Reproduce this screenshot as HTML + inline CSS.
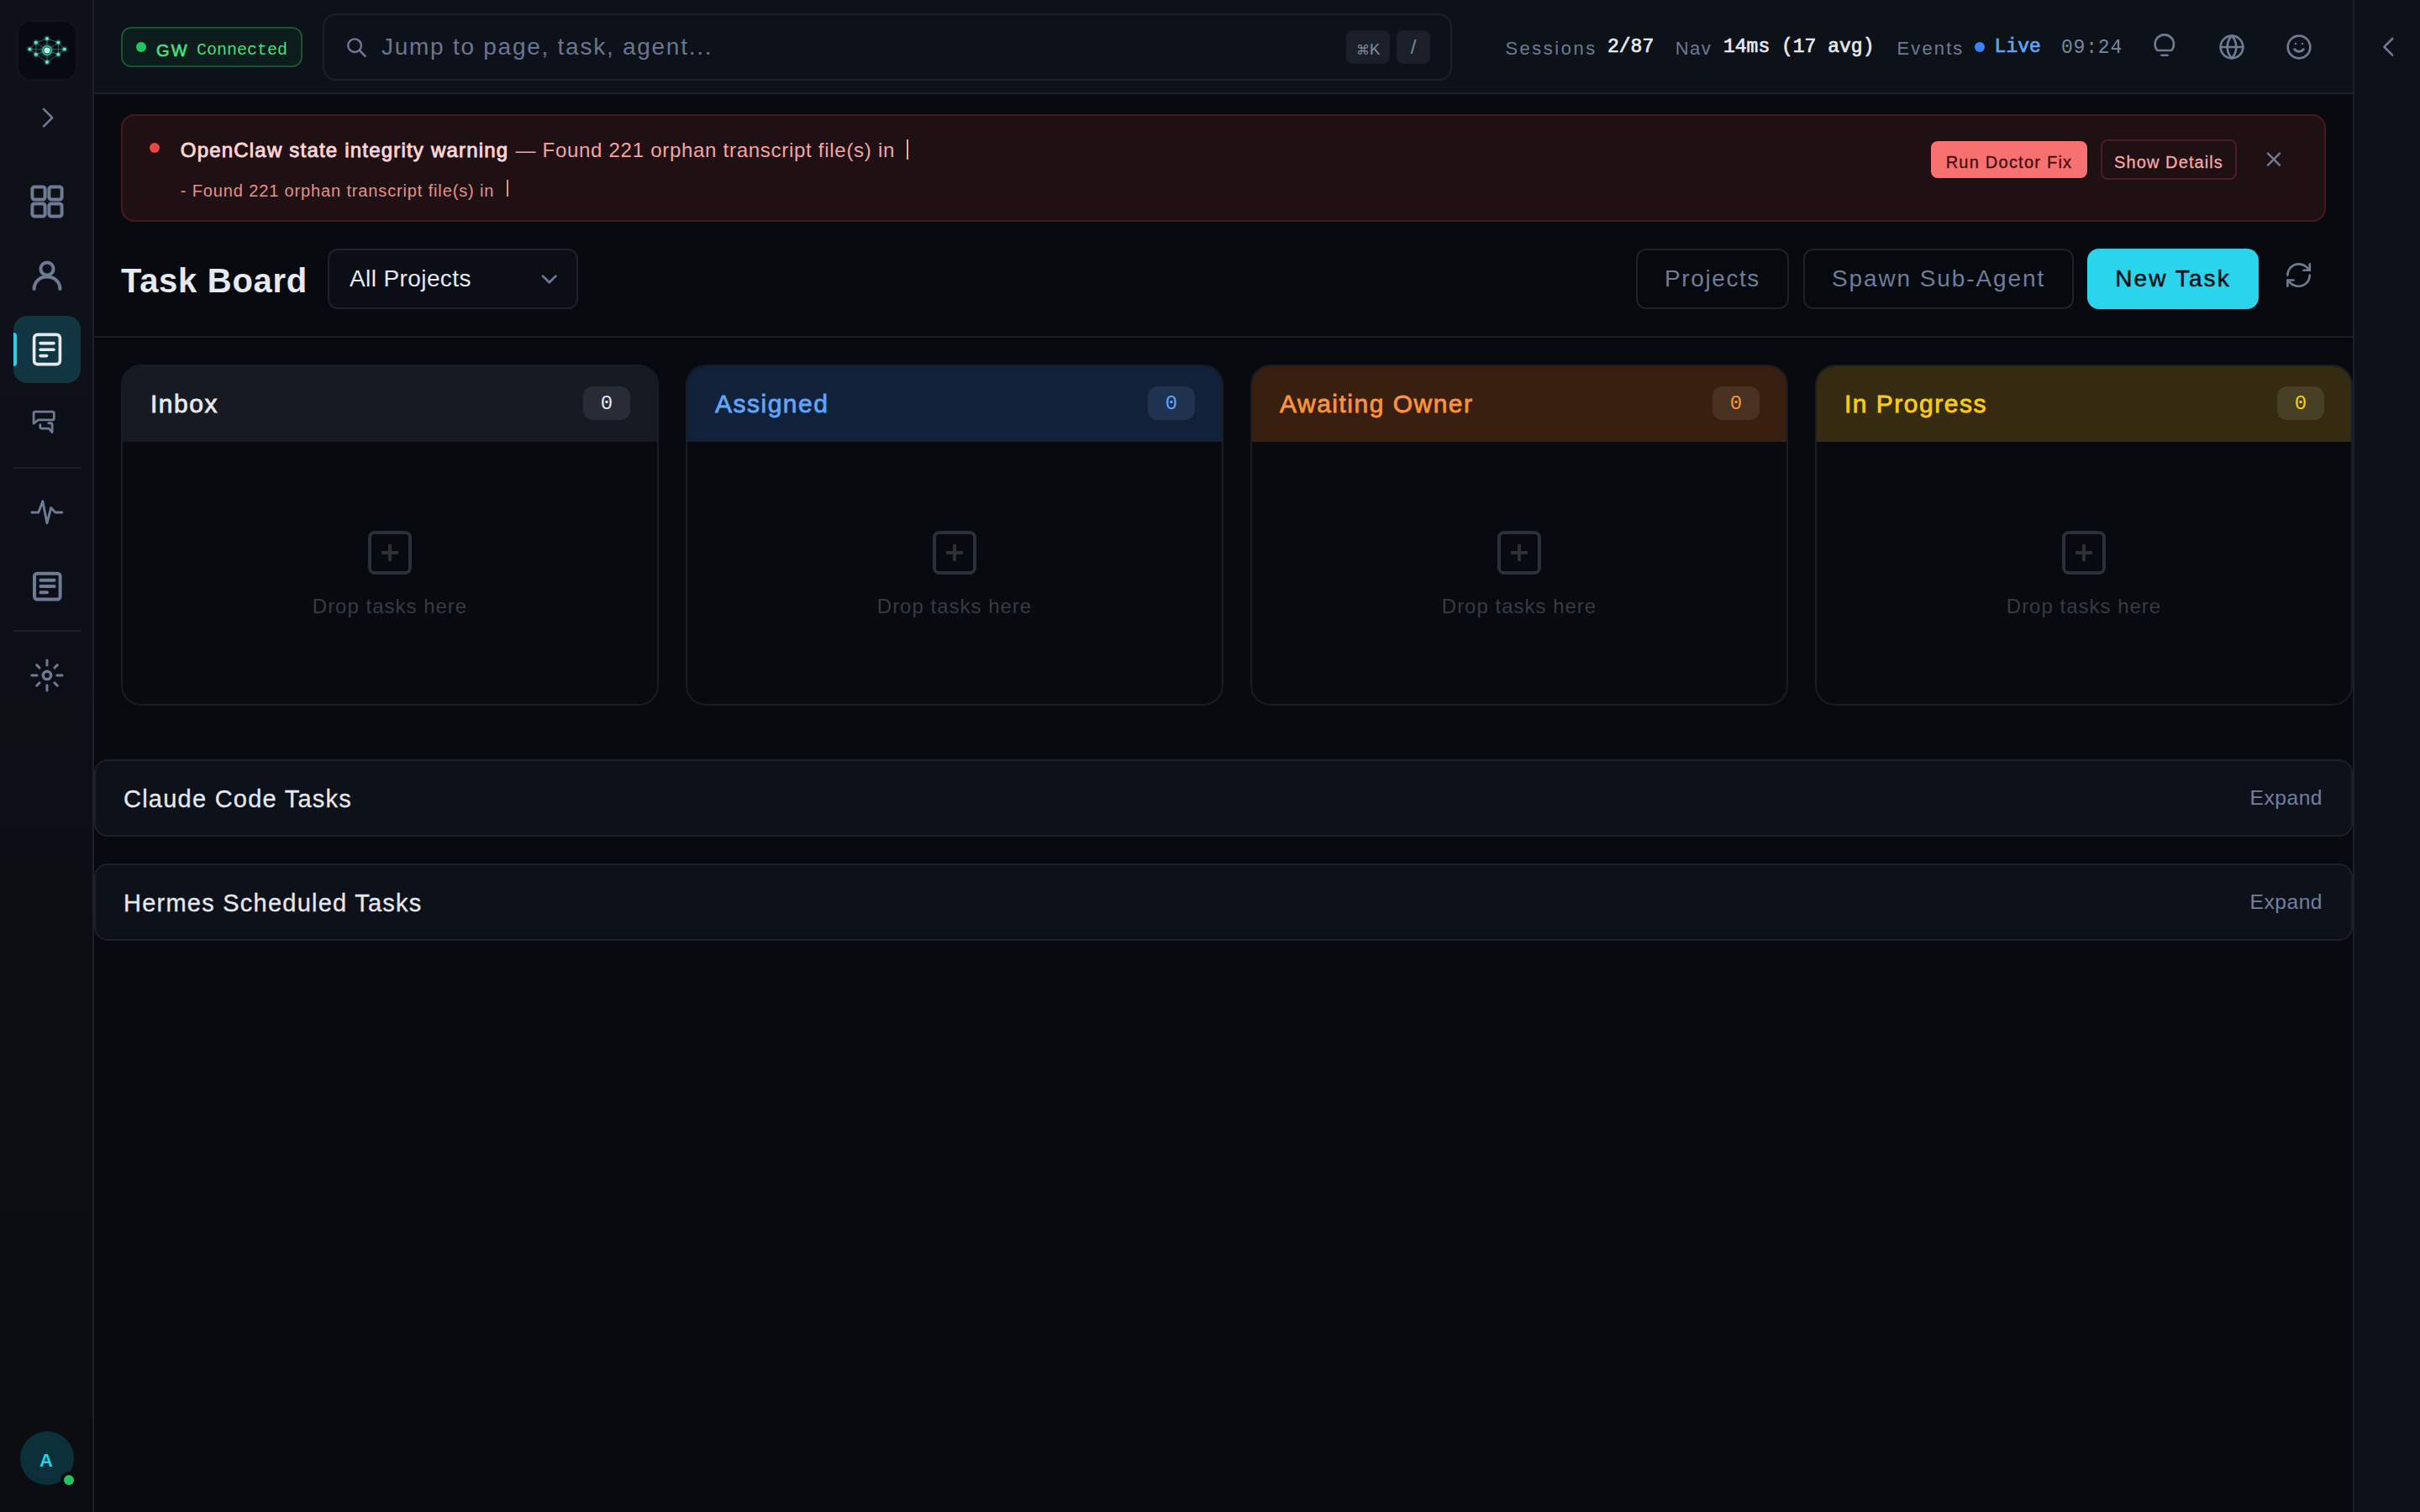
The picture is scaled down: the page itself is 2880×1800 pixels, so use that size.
<!DOCTYPE html>
<html><head><meta charset="utf-8">
<style>
*{box-sizing:border-box;margin:0;padding:0}
html,body{width:1440px;height:900px;overflow:hidden;background:#06090d}
@media (min-width:2000px){html{zoom:2}}
body{font-family:"Liberation Sans",sans-serif;color:#e5e8ee;position:relative}
.abs{position:absolute}
.mono{font-family:"Liberation Mono",monospace}
.t{position:absolute;white-space:pre;line-height:1}
svg{position:absolute;overflow:visible}
/* sidebar */
#side{left:0;top:0;width:56px;height:900px;background:linear-gradient(180deg,#0e1118 0%,#0c0f15 45%,#0a0c10 100%);border-right:1px solid #1c202a}
#topbar{left:56px;top:0;width:1344px;height:56px;background:#0d1118;border-bottom:1px solid #1c202a}
#rail{left:1400px;top:0;width:40px;height:900px;background:#0d1118;border-left:1px solid #1c202a}
.ic{fill:none;stroke:#6e7b94;stroke-width:2;stroke-linecap:round;stroke-linejoin:round}
.card{position:absolute;top:217px;width:320px;height:203px;border:1px solid #181c25;border-radius:12px;background:#070a0e;overflow:hidden}
.card .hd{position:absolute;left:0;top:0;right:0;height:45px}
.card .ttl{position:absolute;left:16.5px;top:14.8px;font-size:15px;font-weight:400;-webkit-text-stroke:.4px currentColor;line-height:1;letter-spacing:.75px}
.card .cnt{position:absolute;right:16px;top:12px;width:28px;height:20px;border-radius:6px;font-family:"Liberation Mono",monospace;font-size:12px;line-height:21px;text-align:center}
.card .plus{position:absolute;left:146px;top:98px;width:26px;height:26px;border:2px solid #2b313b;border-radius:4px}
.card .plus:before{content:"";position:absolute;left:6px;top:10px;width:10px;height:2px;background:#2b313b}
.card .plus:after{content:"";position:absolute;left:10px;top:6px;width:2px;height:10px;background:#2b313b}
.card .drop{position:absolute;left:0;right:0;top:137px;text-align:center;font-size:12px;line-height:1;color:#363b47;letter-spacing:.5px}
.panel{position:absolute;left:56px;width:1344px;height:46px;border:1px solid #1c202a;border-radius:8px;background:#0d1119}
.panel .pt{position:absolute;left:16.5px;top:15.5px;font-size:14.5px;line-height:1;color:#e5e8ee;letter-spacing:.62px;-webkit-text-stroke:.15px currentColor}
.panel .ex{position:absolute;right:17px;top:16.2px;font-size:12.3px;line-height:1;color:#7180a0;letter-spacing:.25px}
</style></head><body>

<!-- SIDEBAR -->
<div id="side" class="abs">
  <div class="abs" style="left:11px;top:13px;width:34px;height:34px;border-radius:7px;background:#070a10;box-shadow:0 0 0 1px #12151c"></div>
  <svg style="left:0;top:0" width="56" height="60" viewBox="0 0 56 60"><defs><filter id="gl" x="-50%" y="-50%" width="200%" height="200%"><feGaussianBlur stdDeviation=".6"/></filter><radialGradient id="cg"><stop offset="0" stop-color="#5fe6cf" stop-opacity=".55"/><stop offset="1" stop-color="#5fe6cf" stop-opacity="0"/></radialGradient></defs>
    <circle cx="28" cy="30" r="5" fill="url(#cg)"/>
    <g stroke="#3f8a80" stroke-width=".45" fill="none" opacity=".75">
      <path d="M28 23L21.4 25.3L17.7 29.3L21.4 32.4L28 37L34.7 32.4L38.4 29.3L34.7 25.3Z"/>
      <path d="M28 23V37M17.7 29.3H38.4M21.4 25.3L28 30L34.7 25.3M21.4 32.4L28 30L34.7 32.4M21.4 25.3V32.4M34.7 25.3V32.4"/>
    </g>
    <g fill="#5ad9bf" filter="url(#gl)" opacity=".6"><circle cx="28" cy="23" r="1.4"/><circle cx="21.4" cy="25.3" r="1.4"/><circle cx="34.7" cy="25.3" r="1.4"/><circle cx="17.7" cy="29.3" r="1.4"/><circle cx="38.4" cy="29.3" r="1.4"/><circle cx="21.4" cy="32.4" r="1.4"/><circle cx="34.7" cy="32.4" r="1.4"/><circle cx="28" cy="37" r="1.4"/></g>
    <g fill="#6fe3c9">
      <circle cx="28" cy="23" r=".95"/><circle cx="21.4" cy="25.3" r=".95"/><circle cx="34.7" cy="25.3" r=".95"/>
      <circle cx="17.7" cy="29.3" r=".95"/><circle cx="38.4" cy="29.3" r=".95"/>
      <circle cx="21.4" cy="32.4" r=".95"/><circle cx="34.7" cy="32.4" r=".95"/><circle cx="28" cy="37" r=".95"/>
    </g>
    <circle cx="28" cy="30" r="2.6" fill="#0e3a38" stroke="#3fc7b0" stroke-width=".7"/>
    <circle cx="28" cy="30" r="1.8" fill="#b8f6ea"/>
  </svg>
  <!-- chevron -->
  <svg style="left:0;top:0" width="56" height="900" viewBox="0 0 56 900">
    <path class="ic" style="stroke-width:1.3" d="M26 64.9L31.1 70.05L26 75.2"/>
    <!-- grid -->
    <g class="ic" stroke-width="1.8">
      <rect x="19.2" y="111.2" width="7.6" height="7.6" rx="1.4"/>
      <rect x="29.2" y="111.2" width="7.6" height="7.6" rx="1.4"/>
      <rect x="19.2" y="121.2" width="7.6" height="7.6" rx="1.4"/>
      <rect x="29.2" y="121.2" width="7.6" height="7.6" rx="1.4"/>
    </g>
    <!-- person -->
    <g class="ic" stroke-width="1.8">
      <circle cx="28" cy="160" r="3.8"/>
      <path d="M20.3 172C20.3 167.5 23.8 164.8 28 164.8C32.2 164.8 35.7 167.5 35.7 172"/>
    </g>
  </svg>
  <div class="abs" style="left:8px;top:188px;width:40px;height:40px;border-radius:8px;background:#113641"></div>
  <div class="abs" style="left:8px;top:198px;width:2px;height:20px;border-radius:0 2px 2px 0;background:#22d3ee"></div>
  <svg style="left:0;top:0" width="56" height="900" viewBox="0 0 56 900">
    <g class="ic" style="stroke:#e6e9ef;stroke-width:1.8">
      <rect x="20.3" y="199.2" width="15.4" height="17.6" rx="2"/>
      <path d="M24 204.3H32M24 208.1H32M24 211.8H27.8"/>
    </g>
    <!-- chat -->
    <g class="ic" style="stroke-width:1.4">
      <path d="M20.04 252.06V246.02A1 1 0 0 1 21.04 245.02H31.15A1 1 0 0 1 32.15 246.02V248.98A1 1 0 0 1 31.15 249.98H22.72Z"/>
      <path d="M23.91 252.86V254.04A1 1 0 0 0 24.91 255.04H29.07L31.05 257.22V252.87A1 1 0 0 0 30.05 251.87H28.87"/>
    </g>
    <line x1="8" y1="278.5" x2="48" y2="278.5" stroke="#1c2029" stroke-width="1"/>
    <!-- pulse -->
    <path class="ic" style="stroke-width:1.45" d="M18.95 304.98H22.92L25.4 298.33L27.98 311.43L30.36 302.2L32.84 304.98H36.9"/>
    <!-- doc -->
    <g class="ic" stroke-width="1.8">
      <rect x="20.5" y="341.4" width="15.3" height="15.3" rx="1.6"/>
      <path d="M24.2 345.4H32.3M24.2 349H32.3M24.2 352.6H28"/>
    </g>
    <line x1="8" y1="375.5" x2="48" y2="375.5" stroke="#1c2029" stroke-width="1"/>
    <!-- gear/sun -->
    <g class="ic" style="stroke-width:1.5">
      <circle cx="27.98" cy="401.98" r="2.35" style="stroke-width:1.7"/>
      <path d="M27.98 392.95V396.03M27.98 407.93V411.01M18.95 401.98H22.03M33.93 401.98H37.01M21.83 395.83L23.52 397.52M32.44 406.44L34.13 408.13M21.83 408.13L23.52 406.44M32.44 397.52L34.13 395.83"/>
    </g>
  </svg>
  <!-- avatar -->
  <div class="abs" style="left:12px;top:852px;width:32px;height:32px;border-radius:50%;background:#0c303a"></div>
  <div class="t" style="left:11.5px;top:863.8px;width:32px;text-align:center;font-size:11px;font-weight:700;color:#22d3ee">A</div>
  <div class="abs" style="left:36px;top:876px;width:10px;height:10px;border-radius:50%;background:#22c55e;border:2px solid #0a0d13"></div>
</div>

<!-- TOPBAR -->
<div id="topbar" class="abs">
  <div class="abs" style="left:16px;top:16px;width:108px;height:24px;border-radius:6px;border:1px solid #185430;background:#0d1c1c"></div>
  <div class="abs" style="left:25px;top:25px;width:6px;height:6px;border-radius:50%;background:#22c55e"></div>
  <div class="t" style="left:37px;top:25px;font-size:10px;-webkit-text-stroke:.35px currentColor;color:#4ade80;letter-spacing:1.1px">GW</div>
  <div class="t mono" style="left:61px;top:24.8px;font-size:10px;color:#4ade80;letter-spacing:0px">Connected</div>

  <div class="abs" style="left:136px;top:8px;width:672px;height:40px;border-radius:8px;border:1px solid #1c212b;background:#0d1119"></div>
  <svg style="left:0;top:0" width="300" height="56" viewBox="0 0 300 56">
    <g class="ic" style="stroke-width:1.2"><circle cx="155.06" cy="27.1" r="3.9"/><path d="M157.9 29.95L161.3 33.4"/></g>
  </svg>
  <div class="t" style="left:171px;top:21px;font-size:14px;color:#687791;letter-spacing:.87px">Jump to page, task, agent...</div>
  <div class="abs" style="left:745px;top:18px;width:26px;height:20px;border-radius:4px;background:#1a1f29"></div>
  <div class="t" style="left:745px;top:24.2px;width:26px;text-align:center;font-size:10px;color:#7b879c"><span style="font-size:8px">⌘</span><span class="mono" style="font-size:10.5px">K</span></div>
  <div class="abs" style="left:775px;top:18px;width:20px;height:20px;border-radius:4px;background:#1a1f29"></div>
  <div class="t" style="left:775px;top:21.8px;width:20px;text-align:center;font-size:12px;color:#7b879c">/</div>

  <div class="t" style="left:839.7px;top:23.6px;font-size:11px;color:#6b7a95;letter-spacing:1.25px">Sessions</div>
  <div class="t mono" style="left:900.5px;top:22.5px;font-size:11.5px;-webkit-text-stroke:.35px currentColor;color:#e6e9ef">2/87</div>
  <div class="t" style="left:940.9px;top:23.6px;font-size:11px;color:#6b7a95;letter-spacing:.7px">Nav</div>
  <div class="t mono" style="left:969.5px;top:22.5px;font-size:11.5px;-webkit-text-stroke:.35px currentColor;color:#e6e9ef">14ms (17 avg)</div>
  <div class="t" style="left:1072.8px;top:23.6px;font-size:11px;color:#6b7a95;letter-spacing:1.05px">Events</div>
  <div class="abs" style="left:1119px;top:25px;width:6px;height:6px;border-radius:50%;background:#3b82f6"></div>
  <div class="t mono" style="left:1130.8px;top:22.5px;font-size:11.5px;-webkit-text-stroke:.35px currentColor;color:#60a5fa">Live</div>
  <div class="t mono" style="left:1170.5px;top:23px;font-size:11.5px;color:#7b879c;letter-spacing:.4px">09:24</div>
  <svg style="left:0;top:0" width="1344" height="56" viewBox="0 0 1344 56">
    <g class="ic" style="stroke-width:1.3">
      <path d="M1227.7 30A5.6 5.6 0 1 1 1236.1 30Z"/>
      <path d="M1230.2 32.9H1233.8"/>
    </g>
  </svg>
  <svg style="left:1264px;top:20px" width="16" height="16" viewBox="0 0 24 24"><g class="ic" style="stroke-width:2"><circle cx="12" cy="12" r="10"/><path d="M12 2a14.5 14.5 0 0 0 0 20 14.5 14.5 0 0 0 0-20"/><path d="M2 12h20"/></g></svg>
  <svg style="left:1304px;top:20px" width="16" height="16" viewBox="0 0 24 24"><g class="ic" style="stroke-width:2"><circle cx="12" cy="12" r="10"/><path d="M8 14s1.5 2 4 2 4-2 4-2"/><path d="M9 9h.01M15 9h.01"/></g></svg>
</div>

<!-- RIGHT RAIL -->
<div id="rail" class="abs">
  <svg style="left:0;top:0" width="40" height="56" viewBox="0 0 40 56">
    <path class="ic" style="stroke-width:1.3" d="M22.6 23L17.7 27.9L22.6 32.8"/>
  </svg>
</div>

<!-- BANNER -->
<div class="abs" style="left:72px;top:68px;width:1312px;height:64px;border-radius:8px;border:1px solid #4a1a1e;background:#1e1013"></div>
<div class="abs" style="left:89px;top:85px;width:6px;height:6px;border-radius:50%;background:#ef4444"></div>
<div class="t" style="left:107.4px;top:83.3px;font-size:12px;font-weight:400;-webkit-text-stroke:.45px currentColor;color:#fcd4d4;letter-spacing:.6px">OpenClaw state integrity warning</div>
<div class="t" style="left:303px;top:83.3px;font-size:12px;color:#f8a3a3;letter-spacing:.36px"> — Found 221 orphan transcript file(s) in</div>
<div class="abs" style="left:539.3px;top:83px;width:1px;height:12px;background:#f8a3a3"></div>
<div class="t" style="left:107.4px;top:108.5px;font-size:10px;color:#e8908c;letter-spacing:.43px">- Found 221 orphan transcript file(s) in</div>
<div class="abs" style="left:301.6px;top:107px;width:1px;height:10px;background:#e8908c"></div>
<div class="abs" style="left:1149px;top:84px;width:93px;height:22px;border-radius:4px;background:#f87171"></div>
<div class="t" style="left:1149px;top:91.5px;width:93px;text-align:center;font-size:10px;-webkit-text-stroke:.15px currentColor;color:#3f0d10;letter-spacing:.62px">Run Doctor Fix</div>
<div class="abs" style="left:1250px;top:83px;width:81px;height:24px;border-radius:4px;border:1px solid #4f1c20"></div>
<div class="t" style="left:1250px;top:91.5px;width:81px;text-align:center;font-size:10px;-webkit-text-stroke:.15px currentColor;color:#f6a8a8;letter-spacing:.55px">Show Details</div>
<svg style="left:0;top:0" width="1440" height="200" viewBox="0 0 1440 200">
  <path class="ic" style="stroke-width:1.25" d="M1349.5 91.3L1356.5 98.3M1356.5 91.3L1349.5 98.3"/>
</svg>

<!-- HEADER ROW -->
<div class="t" style="left:72px;top:157px;font-size:20px;font-weight:700;color:#e6e9ef;letter-spacing:.35px">Task Board</div>
<div class="abs" style="left:195px;top:148px;width:149px;height:36px;border-radius:6px;border:1px solid #1c212b;background:#0b0e15"></div>
<div class="t" style="left:208px;top:159px;font-size:14px;color:#e6e9ef;letter-spacing:.2px">All Projects</div>
<svg style="left:0;top:0" width="400" height="200" viewBox="0 0 400 200">
  <path class="ic" style="stroke-width:1.35" d="M323 164.3L326.85 168.1L330.7 164.3"/>
</svg>
<div class="abs" style="left:973.5px;top:148px;width:91px;height:36px;border-radius:6px;border:1px solid #1c212b"></div>
<div class="t" style="left:973.5px;top:159px;width:91px;text-align:center;font-size:14px;color:#6f7d99;letter-spacing:.8px">Projects</div>
<div class="abs" style="left:1073px;top:148px;width:161px;height:36px;border-radius:6px;border:1px solid #1c212b"></div>
<div class="t" style="left:1073px;top:159px;width:161px;text-align:center;font-size:14px;color:#6f7d99;letter-spacing:.95px">Spawn Sub-Agent</div>
<div class="abs" style="left:1242px;top:148px;width:102px;height:36px;border-radius:7px;background:#2ad4ec"></div>
<div class="t" style="left:1242px;top:159px;width:102px;text-align:center;font-size:14px;font-weight:400;-webkit-text-stroke:.25px currentColor;color:#071015;letter-spacing:1.05px">New Task</div>
<svg style="left:1359.2px;top:155.2px" width="17.6" height="17.6" viewBox="0 0 24 24"><g class="ic" style="stroke-width:1.8"><path d="M3 12a9 9 0 0 1 9-9 9.75 9.75 0 0 1 6.74 2.74L21 8"/><path d="M21 3v5h-5"/><path d="M21 12a9 9 0 0 1-9 9 9.75 9.75 0 0 1-6.74-2.74L3 16"/><path d="M8 16H3v5"/></g></svg>
<div class="abs" style="left:56px;top:200px;width:1344px;height:1px;background:#1a1e27"></div>

<!-- COLUMNS -->
<div class="card" style="left:72px"><div class="hd" style="background:#161a22"></div><div class="ttl" style="color:#e6e9ef">Inbox</div><div class="cnt" style="background:#272c36;color:#e6e9ef">0</div><div class="plus"></div><div class="drop">Drop tasks here</div></div>
<div class="card" style="left:408px"><div class="hd" style="background:#11213a"></div><div class="ttl" style="color:#60a5fa">Assigned</div><div class="cnt" style="background:#1f3250;color:#60a5fa">0</div><div class="plus"></div><div class="drop">Drop tasks here</div></div>
<div class="card" style="left:744px"><div class="hd" style="background:#381f0f"></div><div class="ttl" style="color:#fb923c">Awaiting Owner</div><div class="cnt" style="background:#4a3222;color:#fb923c">0</div><div class="plus"></div><div class="drop">Drop tasks here</div></div>
<div class="card" style="left:1080px"><div class="hd" style="background:#352b10"></div><div class="ttl" style="color:#facc15">In Progress</div><div class="cnt" style="background:#474025;color:#facc15">0</div><div class="plus"></div><div class="drop">Drop tasks here</div></div>

<!-- PANELS -->
<div class="panel" style="top:452px"><div class="pt">Claude Code Tasks</div><div class="ex">Expand</div></div>
<div class="panel" style="top:514px"><div class="pt">Hermes Scheduled Tasks</div><div class="ex">Expand</div></div>

</body></html>
